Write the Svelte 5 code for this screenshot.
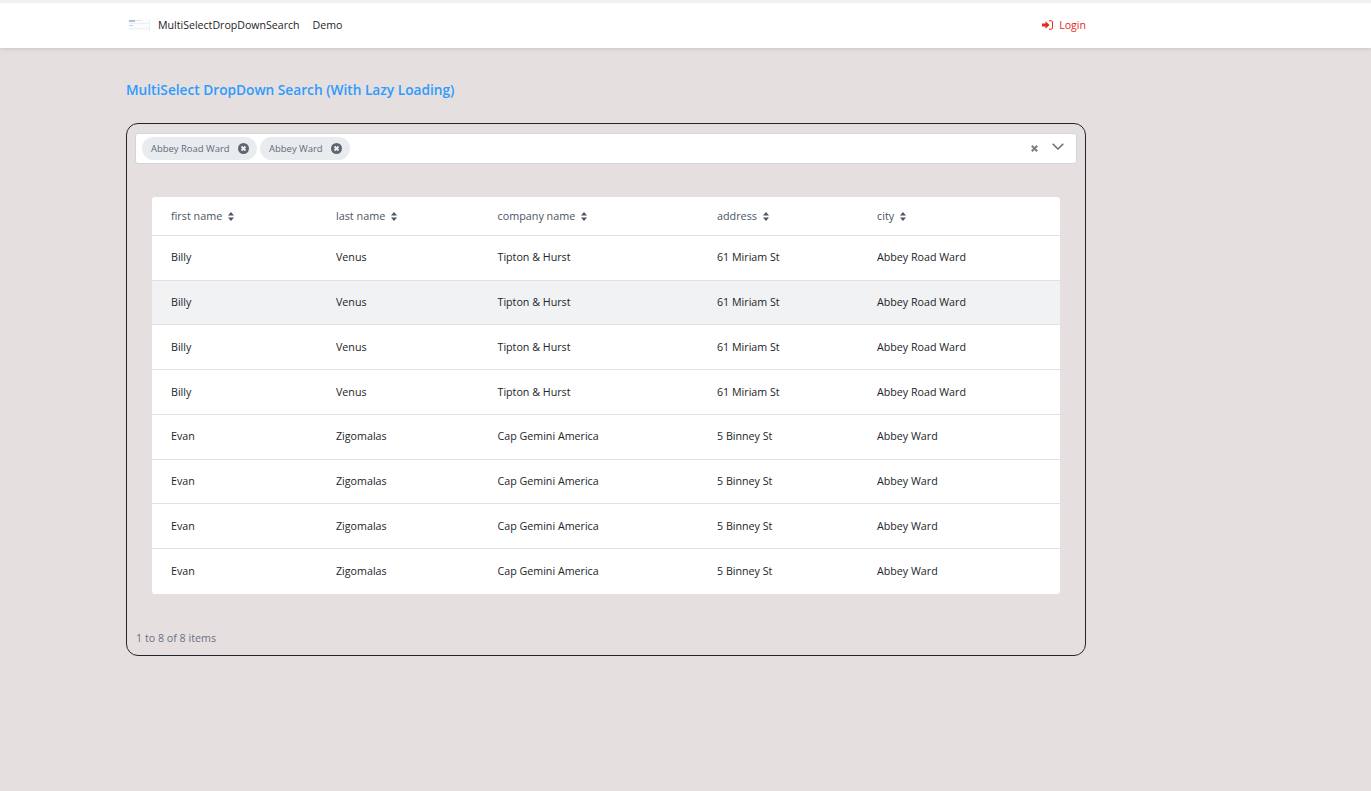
<script>
	const columns = [
		{ key: 'first', label: 'first name' },
		{ key: 'last', label: 'last name' },
		{ key: 'company', label: 'company name' },
		{ key: 'address', label: 'address' },
		{ key: 'city', label: 'city' }
	];

	const billy = { first: 'Billy', last: 'Venus', company: 'Tipton & Hurst', address: '61 Miriam St', city: 'Abbey Road Ward' };
	const evan = { first: 'Evan', last: 'Zigomalas', company: 'Cap Gemini America', address: '5 Binney St', city: 'Abbey Ward' };
	const rows = [billy, billy, billy, billy, evan, evan, evan, evan];

	const selected = ['Abbey Road Ward', 'Abbey Ward'];
</script>

<header class="topbar">
	<div class="topbar-inner">
		<svg class="logo" width="22" height="12" viewBox="0 0 22 12">
			<rect x="0" y="0" width="22" height="12" fill="#fbfcfd" />
			<rect x="1" y="1" width="6" height="2" fill="#a9c2dc" />
			<rect x="7" y="1" width="7" height="1" fill="#dfe4ea" />
			<rect x="1" y="4" width="20" height="1" fill="#eceff3" />
			<rect x="1" y="6" width="4" height="1" fill="#c6d1dc" />
			<rect x="1" y="9" width="20" height="1" fill="#eef0f3" />
			<rect x="21" y="0" width="1" height="12" fill="#eaf1f6" />
		</svg>
		<a class="brand" href="#top">MultiSelectDropDownSearch</a>
		<a class="nav-link" href="#top">Demo</a>
		<a class="login" href="#top">
			<svg width="11" height="10" viewBox="0 0 11 10">
				<path d="M0 3.5h3.5V1.2L7.6 5 3.5 8.8V6.5H0z" fill="currentColor" />
				<path d="M7 .8h2.2a1.3 1.3 0 0 1 1.3 1.3v5.8a1.3 1.3 0 0 1-1.3 1.3H7" fill="none" stroke="currentColor" stroke-width="1" />
			</svg>
			Login
		</a>
	</div>
</header>

<main class="page">
	<h1>MultiSelect DropDown Search (With Lazy Loading)</h1>

	<section class="panel">
		<div class="multiselect">
			<div class="chips">
				{#each selected as item}
					<span class="chip">
						{item}
						<svg class="chip-x" width="11" height="11" viewBox="0 0 11 11">
							<circle cx="5.5" cy="5.5" r="5.5" fill="#5f6670" />
							<path d="M3.5 3.5l4 4m0-4l-4 4" stroke="#eef0f3" stroke-width="1.8" />
						</svg>
					</span>
				{/each}
			</div>
			<svg class="clear" width="7" height="7" viewBox="0 0 7 7">
				<path d="M.8.8l5.4 5.4m0-5.4L.8 6.2" stroke="#7d8288" stroke-width="2.2" />
			</svg>
			<svg class="chevron" width="12" height="7" viewBox="0 0 12 7">
				<path d="M.7.7L6 6l5.3-5.3" fill="none" stroke="#5c6670" stroke-width="1.3" />
			</svg>
		</div>

		<div class="grid-wrap">
			<table>
				<thead>
					<tr>
						{#each columns as col}
							<th class={col.key}>
								{col.label}
								<svg class="sort" width="6" height="9" viewBox="0 0 6 9">
									<path d="M3 0l3 3.5H0zM3 9L0 5.5h6z" fill="#4b5563" />
								</svg>
							</th>
						{/each}
					</tr>
				</thead>
				<tbody>
					{#each rows as row, i}
						<tr class:hovered={i === 1}>
							{#each columns as col}
								<td>{row[col.key]}</td>
							{/each}
						</tr>
					{/each}
				</tbody>
			</table>
		</div>

		<p class="summary">1 to 8 of 8 items</p>
	</section>
</main>

<style>
	:global(body) {
		margin: 0;
		background: #e5dfe0;
		font-family: 'Open Sans', 'Noto Sans', sans-serif;
		font-size: 10.7px;
		color: #212529;
	}

	.topbar {
		background: #fff;
		border-top: 3px solid #f1f1f1;
		height: 45px;
		box-shadow: 0 1px 4px rgba(0, 0, 0, 0.12);
	}

	.topbar-inner {
		box-sizing: border-box;
		width: 960px;
		margin-left: 126px;
		height: 100%;
		padding-bottom: 2px;
		display: flex;
		align-items: center;
		font-size: 10.6px;
	}

	.logo {
		margin-left: 2px;
		margin-right: 8px;
	}

	.brand,
	.nav-link {
		color: #212529;
		text-decoration: none;
	}

	.nav-link {
		margin-left: 13px;
	}

	.login {
		margin-left: auto;
		color: #e6291b;
		text-decoration: none;
		display: flex;
		align-items: center;
		gap: 6px;
	}

	.page {
		width: 960px;
		margin-left: 126px;
	}

	h1 {
		margin: 0;
		padding-top: 33px;
		height: 42px;
		line-height: 17px;
		font-size: 13.7px;
		font-weight: 600;
		color: #2e9bfd;
	}

	.panel {
		box-sizing: border-box;
		height: 533px;
		border: 1px solid #24262b;
		border-radius: 12px;
		padding: 9px 8px;
	}

	.multiselect {
		box-sizing: border-box;
		height: 31px;
		background: #fff;
		border: 1px solid #cfd6de;
		border-radius: 3px;
		display: flex;
		align-items: center;
		padding: 0 12px 0 6px;
	}

	.chips {
		display: flex;
		gap: 3px;
		flex: 1;
	}

	.chip {
		display: inline-flex;
		align-items: center;
		justify-content: space-between;
		gap: 8.5px;
		height: 23px;
		padding: 0 8px 0 9px;
		border-radius: 12px;
		background: #e9ecef;
		color: #5f6b7a;
		font-size: 9.45px;
		font-weight: 500;
	}

	.clear {
		margin-right: 14px;
	}

	.chevron {
		margin-bottom: 4px;
	}

	.grid-wrap {
		margin: 24px 8px 0;
		padding: 8px;
		border: 1px solid #e3e1e4;
	}

	table {
		width: 100%;
		border-collapse: separate;
		border-spacing: 0;
		table-layout: fixed;
		background: #fff;
		border-radius: 3px;
	}

	th {
		box-sizing: border-box;
		height: 37.9px;
		padding: 0 0 0 19px;
		text-align: left;
		font-size: 10.8px;
		font-weight: 500;
		color: #4b5563;
	}

	th.first { width: 165px; }
	th.last { width: 161.5px; }
	th.company { width: 219.5px; }
	th.address { width: 160px; }

	.sort {
		margin-left: 3px;
		vertical-align: -1px;
	}

	td {
		box-sizing: border-box;
		height: 44.75px;
		padding: 0 0 1px 19px;
		border-top: 1px solid #dee2e6;
		color: #212529;
	}

	tbody tr:last-child td {
		height: 45.75px;
		padding-bottom: 2px;
	}

	tr.hovered td {
		background: #f1f2f4;
	}

	.summary {
		margin: 28px 0 0 1px;
		line-height: 15px;
		color: #6b7280;
	}
</style>
